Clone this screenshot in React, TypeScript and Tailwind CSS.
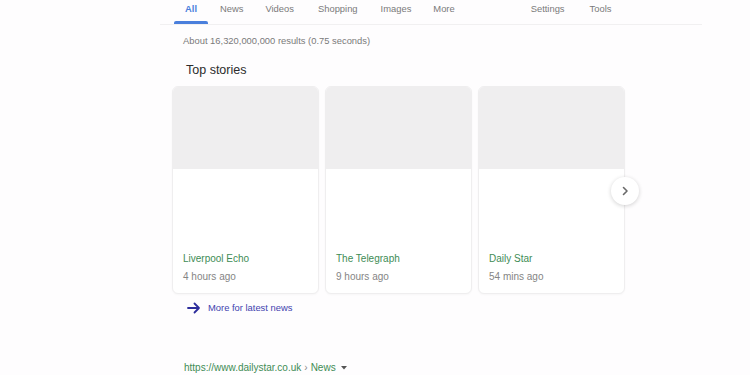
import React from "react";

const cards = [
  { src: "Liverpool Echo", time: "4 hours ago" },
  { src: "The Telegraph", time: "9 hours ago" },
  { src: "Daily Star", time: "54 mins ago" },
];

export default function App() {
  return (
    <div
      className="relative w-[750px] h-[375px] overflow-hidden bg-[#fefdfe]"
      style={{ fontFamily: '"Liberation Sans", Arial, sans-serif' }}
    >
      {/* tabs */}
      <div className="ml-[160px] w-[542px] h-[25px] border-b border-[#f1f0f1] flex items-stretch text-[9.4px] text-[#7a7a7a]">
        <div className="ml-[14px] w-[34px] flex flex-col items-center justify-between">
          <span className="pt-[3px] leading-[11px] text-[#4a7fdc] font-bold">All</span>
          <div className="w-[34px] h-[3px] rounded-t-[2px] bg-[#4a7fdc]" />
        </div>
        <div className="flex pt-[3px] leading-[11px]">
          <span className="ml-[12px]">News</span>
          <span className="ml-[22px]">Videos</span>
          <span className="ml-[24px]">Shopping</span>
          <span className="ml-[23px]">Images</span>
          <span className="ml-[22px]">More</span>
          <span className="ml-[76px]">Settings</span>
          <span className="ml-[25px]">Tools</span>
        </div>
      </div>

      <div className="ml-[172px]">
        <div className="mt-[10px] ml-[11px] text-[9.4px] leading-[11px] text-[#7a7a7a]">
          About 16,320,000,000 results (0.75 seconds)
        </div>
        <div className="mt-[17px] ml-[14px] text-[12.5px] leading-[15px] text-[#2c2c2c]">
          Top stories
        </div>

        <div className="mt-[8px] flex gap-[6px]">
          {cards.map((c) => (
            <div
              key={c.src}
              className="w-[147px] h-[208px] rounded-[6px] border border-[#efeeef] bg-white flex flex-col overflow-hidden shadow-[0_1px_2px_rgba(0,0,0,0.03)]"
            >
              <div className="h-[82px] bg-[#efeeef]" />
              <div className="flex-1 flex flex-col justify-end px-[10px] pb-[9px]">
                <div className="text-[10px] leading-[14px] text-[#3e8c55]">{c.src}</div>
                <div className="mt-[4px] text-[10px] leading-[14px] text-[#858585]">{c.time}</div>
              </div>
            </div>
          ))}
        </div>

        <div className="mt-[7px] ml-[15px] flex items-center h-[14px]">
          <svg width="14" height="12" viewBox="0 0 14 12" fill="none">
            <path d="M1 6h11M7.5 1.5L12 6l-4.5 4.5" stroke="#2d2d9c" strokeWidth="1.8" strokeLinecap="round" strokeLinejoin="round" />
          </svg>
          <span className="ml-[7px] text-[9.4px] leading-[14px] text-[#4242ae]">More for latest news</span>
        </div>

        <div className="mt-[46px] ml-[12px] flex items-center text-[10px] leading-[14px] text-[#3e8c55]">
          <span>https://www.dailystar.co.uk</span>
          <span className="mx-[3px] text-[#8a8a8a]">›</span>
          <span>News</span>
          <svg className="ml-[5px]" width="6" height="4" viewBox="0 0 6 4">
            <path d="M0 0h6L3 3.5z" fill="#555" />
          </svg>
        </div>
      </div>

      {/* next button */}
      <div className="absolute left-[611px] top-[177px] w-[28px] h-[28px] rounded-full bg-white shadow-[0_1px_4px_rgba(0,0,0,0.18)] flex items-center justify-center">
        <svg width="8" height="10" viewBox="0 0 8 10" fill="none">
          <path d="M2.5 1.5L6 5l-3.5 3.5" stroke="#6a6a6a" strokeWidth="1.6" strokeLinecap="round" strokeLinejoin="round" />
        </svg>
      </div>
    </div>
  );
}
